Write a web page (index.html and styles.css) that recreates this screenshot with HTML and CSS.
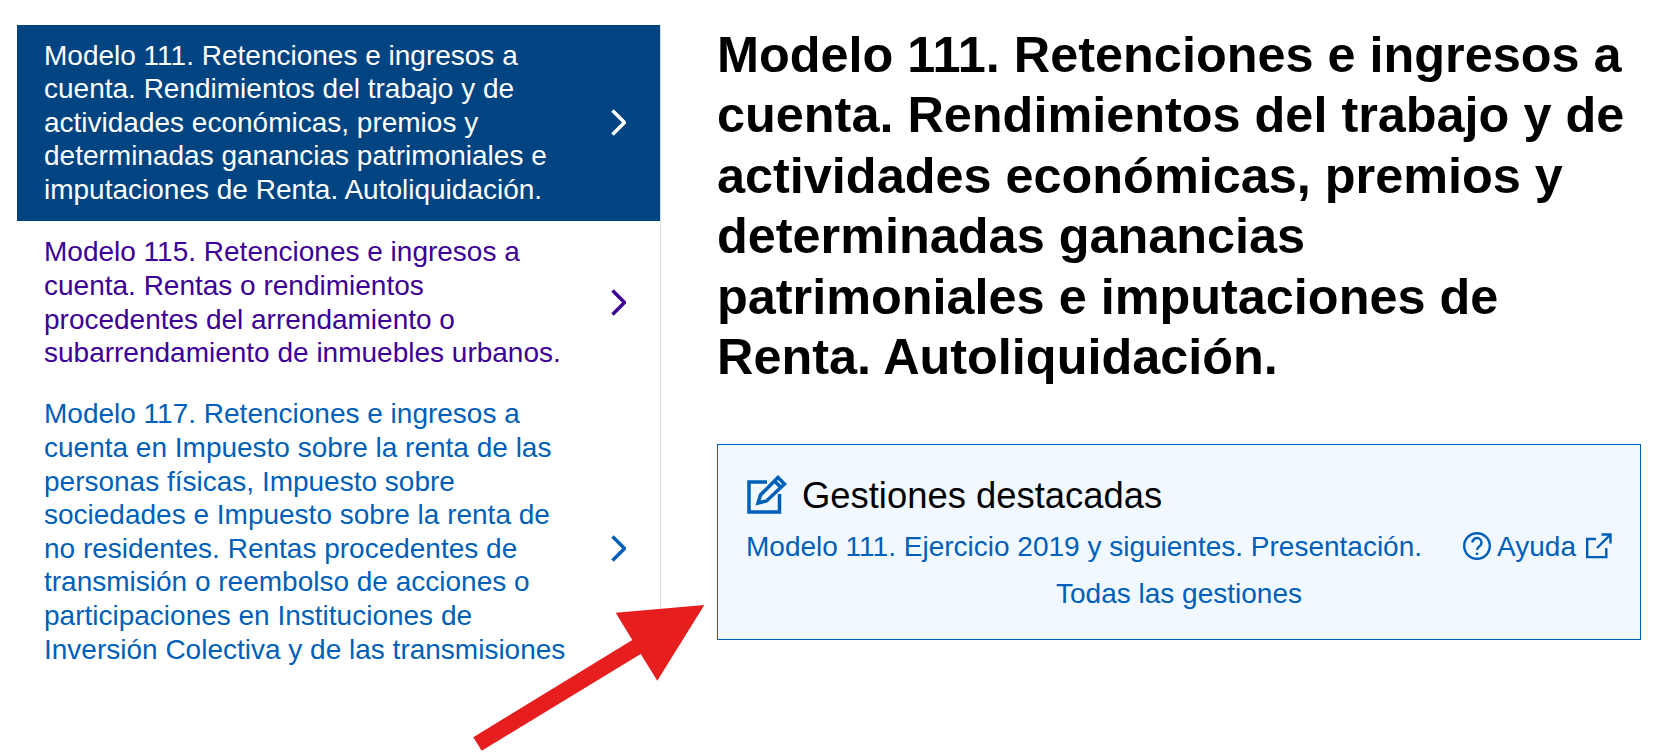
FILE: index.html
```html
<!DOCTYPE html>
<html lang="es">
<head>
    <meta charset="UTF-8">
    <title>Modelo 111</title>
    <link rel="stylesheet" href="styles.css">
</head>
<body>
<div class="page">
    <nav class="side-nav">
        <a class="nav-item active" href="#">
            <span class="nav-text">Modelo 111. Retenciones e ingresos a cuenta. Rendimientos del trabajo y de actividades económicas, premios y determinadas ganancias patrimoniales e imputaciones de Renta. Autoliquidación.</span>
            <svg class="chevron" viewBox="0 0 15 27"><path d="M1.500 1.500l12 12-12 12"/></svg>
        </a>
        <a class="nav-item visited" href="#">
            <span class="nav-text">Modelo 115. Retenciones e ingresos a cuenta. Rentas o rendimientos procedentes del arrendamiento o subarrendamiento de inmuebles urbanos.</span>
            <svg class="chevron" viewBox="0 0 15 27"><path d="M1.500 1.500l12 12-12 12"/></svg>
        </a>
        <a class="nav-item" href="#">
            <span class="nav-text cut-off">Modelo 117. Retenciones e ingresos a cuenta en Impuesto sobre la renta de las personas físicas, Impuesto sobre sociedades e Impuesto sobre la renta de no residentes. Rentas procedentes de transmisión o reembolso de acciones o participaciones en Instituciones de Inversión Colectiva y de las transmisiones</span>
            <svg class="chevron" viewBox="0 0 15 27"><path d="M1.500 1.500l12 12-12 12"/></svg>
        </a>
    </nav>
    <main class="content">
        <h1>Modelo 111. Retenciones e ingresos a cuenta. Rendimientos del trabajo y de actividades económicas, premios y determinadas ganancias patrimoniales e imputaciones de Renta. Autoliquidación.</h1>
        <section class="featured">
            <div class="featured-title">
                <svg class="edit-icon" viewBox="0 0 40 40"><path d="M20 8H2V38H32.500V20"/><path d="M11 29l2.500-8L31 3.500 37.500 10 19.500 27zM27.500 7l6.500 6.500"/></svg>
                <h2>Gestiones destacadas</h2>
            </div>
            <div class="featured-row">
                <a href="#">Modelo 111. Ejercicio 2019 y siguientes. Presentación.</a>
                <a class="help" href="#">
                    <svg class="help-icon" viewBox="0 0 28 28"><circle cx="14" cy="14" r="12.800"/><path d="M9.500 10.500a4.500 4.500 0 1 1 7 3.700c-1.800 1.200-2.500 2-2.500 3.800"/><circle class="dot" cx="14" cy="21.800" r="1.400"/></svg>
                    Ayuda
                    <svg class="ext-icon" viewBox="0 0 26 26"><path d="M10 6H1.200V24.100H20.300V15M15.500 1.500H24.500V10.500M24.500 1.500L11 15"/></svg>
                </a>
            </div>
            <a class="all-link" href="#">Todas las gestiones</a>
        </section>
    </main>
</div>
<svg class="arrow" viewBox="0 0 250 152"><path d="M13.300 137.300L172.300 40 155.700 12.700 244.300 5 197.300 80.700 180.700 54 21.700 150.700z"/></svg>
</body>
</html>
```

FILE: styles.css
```css
body {
    margin: 0;
    font-family: "Liberation Sans", Arial, sans-serif;
    color: #000;
    background-color: #fff;
}
a {
    text-decoration: none;
    color: #005fb8;
}
.page {
    display: flex;
    align-items: flex-start;
    gap: 56px;
    padding: 25px 0 0 17px;
}
.side-nav {
    width: 643px;
    height: 640px;
    flex: none;
    border-right: 1px solid #d6d9e2;
    overflow: hidden;
}
.nav-item {
    display: flex;
    align-items: center;
    justify-content: space-between;
    padding: 13.800px 34px 13.800px 27px;
    font-size: 28px;
    line-height: 33.600px;
}
.nav-text {
    width: 531px;
}
/* the list runs on past the fold, the chevron stays centred on the whole item */
.nav-text.cut-off {
    padding-bottom: 33.600px;
}
.nav-item.active {
    padding-top: 13.500px;
    padding-bottom: 14.200px;
    margin-bottom: 1px;
    background-color: #004481;
    color: #fff;
}
.nav-item.visited {
    color: #3d0097;
}
.chevron {
    width: 15px;
    height: 27px;
    flex: none;
    fill: none;
    stroke: currentColor;
    stroke-width: 3.500;
}
.content {
    width: 924px;
    flex: none;
}
h1 {
    margin: 0 0 56px;
    font-size: 50.400px;
    line-height: 60.480px;
    font-weight: bold;
}
.featured {
    border: 1px solid #005fb8;
    background-color: #f1f8ff;
    padding: 29px 28px 28px 28px;
    font-size: 28px;
    line-height: 33.600px;
}
.featured-title {
    display: flex;
    align-items: center;
    gap: 15px;
}
h2 {
    margin: 0;
    font-size: 36.400px;
    font-weight: normal;
    line-height: 43.700px;
}
.edit-icon {
    width: 40px;
    height: 40px;
    flex: none;
    margin: -4px 0 0 1px;
    fill: none;
    stroke: #005fb8;
    stroke-width: 3.500;
}
.featured-row {
    display: flex;
    justify-content: space-between;
    margin-top: 12px;
}
.help {
    display: flex;
    align-items: center;
    gap: 6px;
}
.help-icon {
    width: 28px;
    height: 28px;
    fill: none;
    stroke: #005fb8;
    stroke-width: 2.400;
}
.help-icon .dot {
    fill: #005fb8;
    stroke: none;
}
.ext-icon {
    width: 26px;
    height: 26px;
    margin-left: 4px;
    fill: none;
    stroke: #005fb8;
    stroke-width: 2.400;
}
.all-link {
    display: block;
    margin-top: 14px;
    text-align: center;
}
.arrow {
    position: absolute;
    left: 460px;
    top: 600px;
    width: 250px;
    height: 152px;
    fill: #e61e1e;
}
```
